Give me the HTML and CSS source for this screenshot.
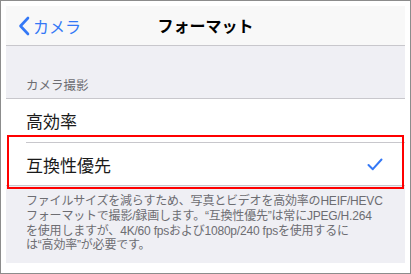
FILE: index.html
```html
<!DOCTYPE html>
<html lang="ja">

<head>
    <meta charset="UTF-8">
    <meta name="viewport" content="width=device-width, initial-scale=1.0">
    <title>フォーマット</title>
    <link rel="stylesheet" href="styles.css">
</head>

<body>
    <div class="frame">
        <div class="screen">
            <div class="nav">
                <div class="back">
                    <svg width="12" height="20" viewBox="0 0 12 20">
                        <path d="M10 2 L2.5 10 L10 18" fill="none" stroke="#3478f6" stroke-width="2.6" stroke-linecap="round" stroke-linejoin="round"/>
                    </svg>
                    <span>カメラ</span>
                </div>
                <div class="title">フォーマット</div>
            </div>
            <div class="group-header">カメラ撮影</div>
            <div class="list">
                <div class="row">
                    <span class="label">高効率</span>
                </div>
                <div class="row selected">
                    <span class="label">互換性優先</span>
                    <svg class="check" width="16" height="13" viewBox="0 0 16 13">
                        <path d="M1.5 7 L5.8 11.2 L14.5 1.5" fill="none" stroke="#3478f6" stroke-width="2" stroke-linecap="round" stroke-linejoin="round"/>
                    </svg>
                </div>
            </div>
            <div class="footer">
                ファイルサイズを減らすため、写真とビデオを高効率のHEIF/HEVC<br>
                フォーマットで撮影/録画します。“互換性優先”は常にJPEG/H.264<br>
                を使用しますが、4K/60 fpsおよび1080p/240 fpsを使用するに<br>
                は“高効率”が必要です。
            </div>
            <div class="highlight"></div>
        </div>
    </div>
</body>

</html>
```

FILE: styles.css
```css
* {
    margin: 0;
    padding: 0;
    box-sizing: border-box;
}

body {
    font-family: 'Noto Sans CJK JP', 'Liberation Sans', sans-serif;
    background: #fff;
}

.frame {
    width: 411px;
    height: 274px;
    border: 1px solid #8c8c8c;
    padding: 5px 5px 10px 5px;
    background: #fff;
}

.screen {
    position: relative;
    width: 399px;
    height: 257px;
    background: #efeff4;
}

.nav {
    position: relative;
    height: 40px;
    background: #f8f8f8;
    border-bottom: 1px solid #c8c7cc;
    display: flex;
    align-items: center;
    justify-content: center;
    padding-bottom: 2px;
}

.back {
    position: absolute;
    left: 12px;
    top: 8px;
    display: flex;
    align-items: center;
    gap: 3px;
    color: #3478f6;
    font-size: 16px;
}

.title {
    font-size: 16px;
    font-weight: bold;
    color: #000;
}

.group-header {
    height: 53px;
    padding: 0 20px 4px;
    display: flex;
    align-items: flex-end;
    font-size: 12.5px;
    color: #6d6d72;
    border-bottom: 1px solid #c8c7cc;
}

.list {
    background: #fff;
    border-bottom: 1px solid #c8c7cc;
}

.row {
    height: 43px;
    margin-left: 20px;
    padding-right: 22px;
    display: flex;
    align-items: center;
    justify-content: space-between;
    font-size: 17px;
    color: #1a1a1a;
}

.row + .row {
    border-top: 1px solid #c8c7cc;
}

.label {
    line-height: 1;
}

.footer {
    padding: 8px 0 0 20px;
    font-family: 'Liberation Sans', 'Noto Sans CJK JP', sans-serif;
    font-size: 12px;
    letter-spacing: -0.2px;
    line-height: 14.8px;
    color: #6d6d72;
    white-space: nowrap;
}

.highlight {
    position: absolute;
    left: 1px;
    top: 129px;
    width: 397px;
    height: 54px;
    border: 2px solid #ff0000;
}
```
